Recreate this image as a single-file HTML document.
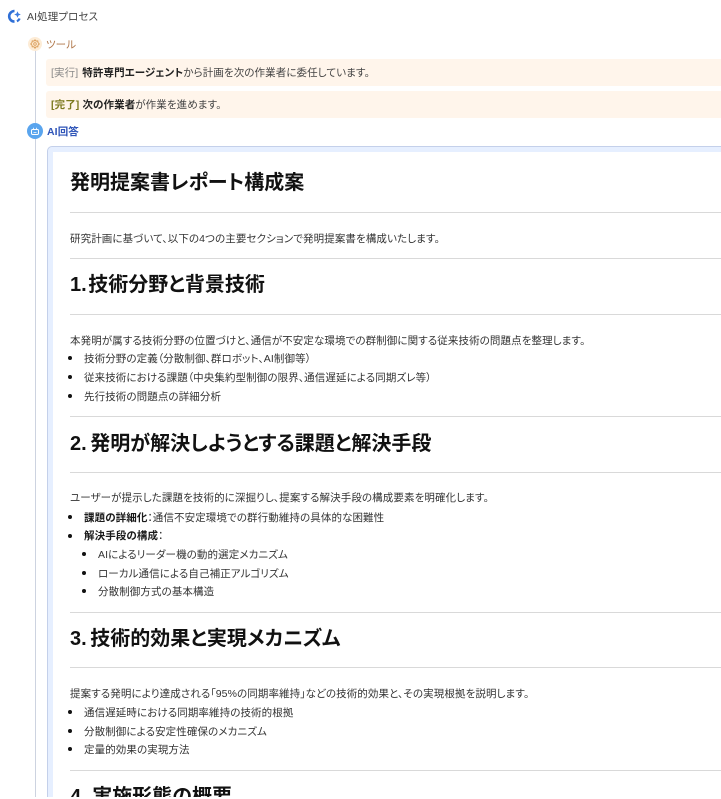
<!DOCTYPE html>
<html lang="ja"><head><meta charset="utf-8"><style>
html,body{margin:0;padding:0;background:#fff;width:721px;height:799px;overflow:hidden}
body{position:relative;font-family:"Liberation Sans","Noto Sans CJK JP",sans-serif;color:#333;font-size:10.5px;font-feature-settings:"palt" 1;letter-spacing:.1px}
.a{position:absolute;white-space:nowrap}
.t{line-height:14px;color:#333;font-size:10.5px;left:70px}
.l{line-height:14px;color:#333;font-size:10.5px;left:84px}
.l2{left:98px}
.d{position:absolute;width:4px;height:4px;border-radius:50%;background:#111}
.h{left:70px;font-weight:700;color:#111;font-size:20px;line-height:28px;letter-spacing:0;word-spacing:-2px}
.r{position:absolute;left:70px;width:651px;height:1px;background:#d9d9d9}
b{color:#1a1a1a}
#clip{position:absolute;left:0;top:0;width:721px;height:797px;overflow:hidden}
</style></head><body><div id="clip">
<svg class="a" style="left:6px;top:8px" width="16" height="16" viewBox="0 0 16 16"><path d="M8.5 3A5.300 5.300 0 1 0 8.5 13.600" fill="none" stroke="#2f6fd6" stroke-width="2.600"/><path d="M11.500 3.200l1 2.300 2.300 1-2.300 1-1 2.300-1-2.300-2.300-1 2.300-1z" fill="#3b7be0"/><path d="M13.600 10.500a5 5 0 0 1-2.700 2.700" fill="none" stroke="#2f6fd6" stroke-width="2.200"/></svg>
<div class="a" style="left:27px;top:10px;line-height:14px;color:#444">AI処理プロセス</div>
<div class="a" style="left:35px;top:50px;width:1px;height:747px;background:#cdd3e0"></div>
<div class="a" style="left:28px;top:37px;width:14px;height:14px;border-radius:50%;background:#fdecd6"></div>
<svg class="a" style="left:30px;top:39px" width="10" height="10" viewBox="0 0 10 10"><path d="M5 .8l1.100 1.300 1.700-.2.200 1.700L9.300 5 8 6.200l-.2 1.700-1.700-.2L5 9.200 3.900 7.700l-1.700.2L2 6.200.7 5 2 3.600l.2-1.700 1.700.2z" fill="none" stroke="#d99a55" stroke-width=".9"/><circle cx="5" cy="5" r="1.300" fill="none" stroke="#d99a55" stroke-width=".8"/></svg>
<div class="a" style="left:46px;top:38px;line-height:14px;color:#b0774a">ツール</div>
<div class="a" style="left:46px;top:59px;width:675px;height:27px;background:#fff5eb;border-radius:3px 0 0 3px"></div>
<div class="a" style="left:46px;top:91px;width:675px;height:27px;background:#fff5eb;border-radius:3px 0 0 3px"></div>
<div class="a" style="left:51px;top:66px;line-height:14px;color:#444"><span style="color:#888">[実行]</span> <b style="color:#222;margin-left:1px">特許専門エージェント</b>から計画を次の作業者に委任しています。</div>
<div class="a" style="left:51px;top:98px;line-height:14px;color:#444"><span style="color:#7c7a20;font-weight:700">[完了]</span> <b style="color:#222">次の作業者</b>が作業を進めます。</div>
<div class="a" style="left:27px;top:123px;width:16px;height:16px;border-radius:50%;background:#5aa5ee"></div>
<svg class="a" style="left:30px;top:126px" width="10" height="10" viewBox="0 0 10 10"><rect x="1.500" y="3.500" width="7" height="5" rx="1.200" fill="none" stroke="#fff" stroke-width="1"/><path d="M3.500 3.500V1.800M6.500 3.500V1.800M3.500 6.500h3" stroke="#fff" stroke-width=".8"/></svg>
<div class="a" style="left:47px;top:125px;line-height:14px;color:#2f55b8;font-weight:700">AI回答</div>
<div class="a" style="left:47px;top:146px;width:680px;height:660px;background:#e6efff;border:1px solid #c4d0ea;border-radius:5px 0 0 0;box-sizing:border-box"></div>
<div class="a" style="left:53px;top:152px;width:668px;height:650px;background:#fff"></div>

<div class="a h" style="top:169px">発明提案書レポート構成案</div>
<div class="r" style="top:212px"></div>
<div class="a t" style="top:232px">研究計画に基づいて、以下の4つの主要セクションで発明提案書を構成いたします。</div>
<div class="r" style="top:258px"></div>
<div class="a h" style="top:271px;word-spacing:-4px">1. 技術分野と背景技術</div>
<div class="r" style="top:314px"></div>
<div class="a t" style="top:334px">本発明が属する技術分野の位置づけと、通信が不安定な環境での群制御に関する従来技術の問題点を整理します。</div>
<div class="d" style="left:68px;top:356px"></div><div class="a l" style="top:352px">技術分野の定義（分散制御、群ロボット、AI制御等）</div>
<div class="d" style="left:68px;top:375px"></div><div class="a l" style="top:371px">従来技術における課題（中央集約型制御の限界、通信遅延による同期ズレ等）</div>
<div class="d" style="left:68px;top:394px"></div><div class="a l" style="top:390px">先行技術の問題点の詳細分析</div>
<div class="r" style="top:416px"></div>
<div class="a h" style="top:430px">2. 発明が解決しようとする課題と解決手段</div>
<div class="r" style="top:472px"></div>
<div class="a t" style="top:491px">ユーザーが提示した課題を技術的に深掘りし、提案する解決手段の構成要素を明確化します。</div>
<div class="d" style="left:68px;top:515px"></div><div class="a l" style="top:511px"><b>課題の詳細化</b>：通信不安定環境での群行動維持の具体的な困難性</div>
<div class="d" style="left:68px;top:534px"></div><div class="a l" style="top:529px"><b>解決手段の構成</b>：</div>
<div class="d" style="left:82px;top:552px"></div><div class="a l l2" style="top:548px">AIによるリーダー機の動的選定メカニズム</div>
<div class="d" style="left:82px;top:571px"></div><div class="a l l2" style="top:567px">ローカル通信による自己補正アルゴリズム</div>
<div class="d" style="left:82px;top:589px"></div><div class="a l l2" style="top:585px">分散制御方式の基本構造</div>
<div class="r" style="top:612px"></div>
<div class="a h" style="top:625px">3. 技術的効果と実現メカニズム</div>
<div class="r" style="top:667px"></div>
<div class="a t" style="top:687px">提案する発明により達成される「95%の同期率維持」などの技術的効果と、その実現根拠を説明します。</div>
<div class="d" style="left:68px;top:710px"></div><div class="a l" style="top:706px">通信遅延時における同期率維持の技術的根拠</div>
<div class="d" style="left:68px;top:729px"></div><div class="a l" style="top:725px">分散制御による安定性確保のメカニズム</div>
<div class="d" style="left:68px;top:747px"></div><div class="a l" style="top:743px">定量的効果の実現方法</div>
<div class="r" style="top:770px"></div>
<div class="a h" style="top:783px;word-spacing:0">4. 実施形態の概要</div>
</div></body></html>
